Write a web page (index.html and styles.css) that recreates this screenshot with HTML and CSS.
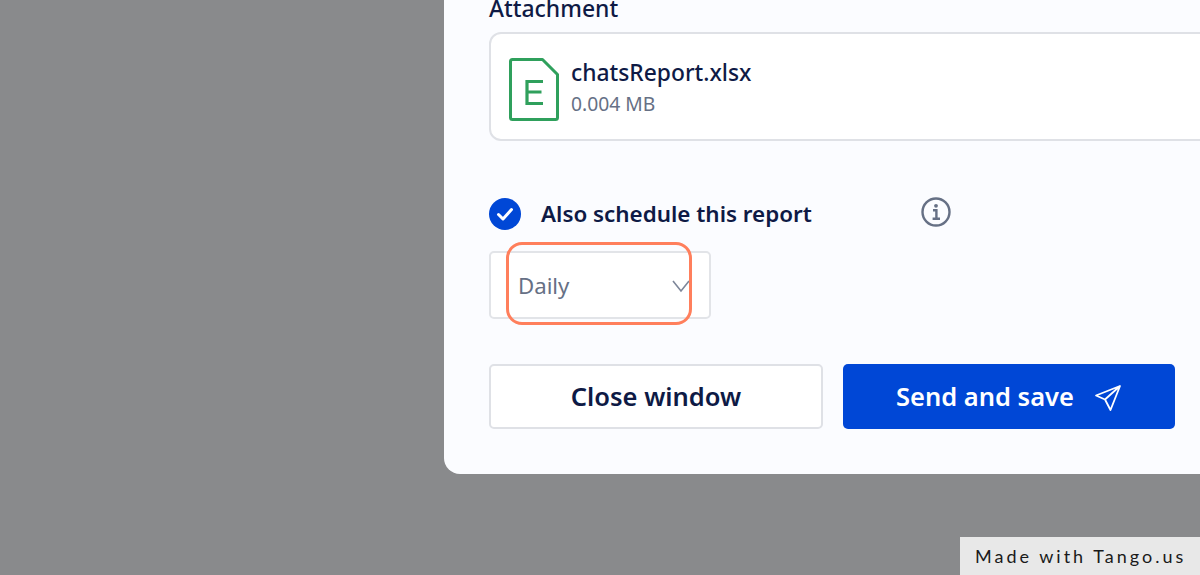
FILE: index.html
```html
<!DOCTYPE html>
<html lang="en">
  <head>
    <meta charset="UTF-8" />
    <title>Send report</title>
    <link rel="stylesheet" href="styles.css">
  </head>
  <body>
    <div class="modal">
      <div class="label">Attachment</div>
      <div class="file-card">
        <svg class="file-icon" width="52" height="66" viewBox="0 0 52 66" fill="none">
          <path d="M4.5 3.5H34.5L49.5 18.5V61.5Q49.5 63.5 47.5 63.5H4.5Q2.5 63.5 2.5 61.5V5.5Q2.5 3.5 4.5 3.5Z" stroke="#2fa05c" stroke-width="3" stroke-linejoin="round" />
          <path d="M35 25.5H19V47.5H35M19 36H33.5" stroke="#2fa05c" stroke-width="3.2" />
        </svg>
        <div class="file-info">
          <div class="file-name">chatsReport.xlsx</div>
          <div class="file-size">0.004 MB</div>
        </div>
      </div>

      <div class="schedule-row">
        <svg class="check" width="32" height="32" viewBox="0 0 32 32">
          <circle cx="16" cy="16" r="16" fill="#0047d6" />
          <path d="M9.5 16.5L14 21L22.5 11.5" fill="none" stroke="#fff" stroke-width="3" stroke-linecap="round" stroke-linejoin="round" />
        </svg>
        <span class="schedule-text">Also schedule this report</span>
        <svg class="info" width="32" height="32" viewBox="0 0 32 32" fill="none">
          <circle cx="16" cy="16" r="13.5" stroke="#667085" stroke-width="2.4" />
          <circle cx="16" cy="9.8" r="1.9" fill="#667085" />
          <path d="M13 14.2H16.4V22.4M12.6 22.8H20" stroke="#667085" stroke-width="2.4" />
        </svg>
      </div>

      <div class="select">
        <span>Daily</span>
        <svg class="chevron" width="20" height="14" viewBox="0 0 20 14" fill="none">
          <path d="M2 2L10 12L18 2" stroke="#7d8699" stroke-width="1.6" />
        </svg>
        <div class="highlight"></div>
      </div>

      <div class="buttons">
        <button class="btn btn-close">Close window</button>
        <button class="btn btn-send">
          Send and save
          <svg class="send-icon" width="28" height="28" viewBox="0 0 28 28" fill="none">
            <path d="M26 2L2 11.5L11 15.5L16.5 26L26 2ZM26 2L11 15.5" stroke="#fff" stroke-width="1.8" stroke-linejoin="round" />
          </svg>
        </button>
      </div>
    </div>

    <div class="tango">Made with Tango.us</div>
  </body>
</html>
```

FILE: styles.css
```css
html,
body {
  height: 100%;
}
body {
  margin: 0;
  background-color: #898a8c;
  font-family: "Noto Sans", sans-serif;
  color: #0e1a45;
  overflow: hidden;
}

.modal {
  margin-left: 444px;
  height: 474px;
  box-sizing: border-box;
  padding-left: 45px;
  background-color: #fbfcff;
  border-radius: 0 0 0 16px;
  overflow: hidden;
}

.label {
  height: 18px;
  line-height: 18px;
  margin-bottom: 14px;
  font-size: 22.9px;
  font-weight: 500;
}

.file-card {
  display: flex;
  align-items: center;
  gap: 11px;
  width: 800px;
  height: 109px;
  box-sizing: border-box;
  padding-left: 17px;
  background-color: #fff;
  border: 2px solid #dfe1e6;
  border-radius: 12px;
}
.file-icon {
  margin-top: 5px;
}
.file-info {
  margin-top: 2px;
}
.file-name {
  font-size: 22.8px;
  font-weight: 500;
  line-height: 28px;
}
.file-size {
  margin-top: 5px;
  font-size: 19.3px;
  line-height: 24px;
  color: #667085;
}

.schedule-row {
  display: flex;
  align-items: center;
  height: 32px;
  margin-top: 57px;
}
.schedule-text {
  margin: -2px 0 0 20px;
  width: 379px;
  font-size: 22.4px;
  font-weight: 600;
}
.info {
  margin-top: -4px;
}

.select {
  position: relative;
  display: flex;
  align-items: center;
  justify-content: space-between;
  width: 222px;
  height: 68px;
  box-sizing: border-box;
  margin-top: 21px;
  padding: 0 18px 0 27px;
  background-color: #fff;
  border: 2px solid #e2e4e8;
  border-radius: 5px;
  font-size: 22.2px;
  color: #667085;
}
.chevron {
  margin-top: 2px;
}
.highlight {
  position: absolute;
  left: 15px;
  top: -11px;
  width: 186px;
  height: 83px;
  box-sizing: border-box;
  border: 3px solid #ff7f5c;
  border-radius: 16px;
}

.buttons {
  display: flex;
  gap: 20px;
  margin-top: 45px;
}
.btn {
  display: flex;
  align-items: center;
  justify-content: center;
  height: 65px;
  box-sizing: border-box;
  padding: 0 0 2px;
  border-radius: 5px;
  font-family: inherit;
  font-size: 25.5px;
  font-weight: 600;
}
.btn-close {
  width: 334px;
  background-color: #fff;
  border: 2px solid #dfe1e6;
  color: #0e1a45;
}
.btn-send {
  gap: 20px;
  width: 332px;
  background-color: #0047d6;
  border: none;
  color: #fff;
}
.send-icon {
  margin-top: 4px;
}

.tango {
  position: absolute;
  right: 0;
  bottom: 0;
  width: 240px;
  height: 38px;
  line-height: 38px;
  box-sizing: border-box;
  padding-left: 15px;
  background-color: #e8e8e8;
  font-family: "Lato", sans-serif;
  font-size: 18px;
  letter-spacing: 3px;
  color: #1a1a1a;
  white-space: nowrap;
}
```
